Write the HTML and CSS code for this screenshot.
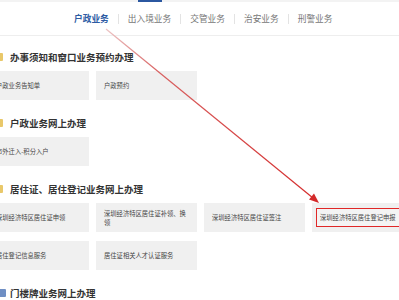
FILE: index.html
```html
<!DOCTYPE html>
<html lang="zh-CN">
<head>
<meta charset="utf-8">
<link rel="stylesheet" href="styles.css">
</head>
<body>
<div class="page">
  <div class="topstrip"><span class="topmark"></span></div>
  <nav class="nav">
    <span class="nav-item active">户政业务</span>
    <span class="nav-item">出入境业务</span>
    <span class="nav-item">交管业务</span>
    <span class="nav-item">治安业务</span>
    <span class="nav-item">刑警业务</span>
  </nav>
  <main class="content">
    <section class="section first">
      <h2 class="section-title"><span class="mark"></span>办事须知和窗口业务预约办理</h2>
      <div class="cards">
        <div class="card">户政业务告知单</div>
        <div class="card">户政预约</div>
      </div>
    </section>
    <section class="section">
      <h2 class="section-title"><span class="mark"></span>户政业务网上办理</h2>
      <div class="cards">
        <div class="card">市外迁入-积分入户</div>
      </div>
    </section>
    <section class="section">
      <h2 class="section-title"><span class="mark"></span>居住证、居住登记业务网上办理</h2>
      <div class="cards">
        <div class="card">深圳经济特区居住证申领</div>
        <div class="card">深圳经济特区居住证补领、换领</div>
        <div class="card">深圳经济特区居住证签注</div>
        <div class="card"><span class="highlight">深圳经济特区居住登记申报</span></div>
        <div class="card">居住登记信息服务</div>
        <div class="card">居住证相关人才认证服务</div>
      </div>
    </section>
    <section class="section">
      <h2 class="section-title"><span class="mark blue"></span>门楼牌业务网上办理</h2>
    </section>
  </main>
  <svg class="arrow" width="399" height="300" viewBox="0 0 399 300">
    <defs>
      <linearGradient id="g" x1="106" y1="29" x2="318" y2="202" gradientUnits="userSpaceOnUse">
        <stop offset="0" stop-color="#ecc4c4"/>
        <stop offset="0.25" stop-color="#d86060"/>
        <stop offset="1" stop-color="#d42a2a"/>
      </linearGradient>
    </defs>
    <line x1="106" y1="29" x2="313" y2="198" stroke="url(#g)" stroke-width="1.2"/>
    <polygon points="319,203 309,199.5 314,193.5" fill="#d42a2a"/>
  </svg>
</div>
</body>
</html>
```

FILE: styles.css
```css
html, body {
  margin: 0;
  padding: 0;
  background: #fff;
}
body {
  width: 399px;
  height: 300px;
  overflow: hidden;
  font-family: "Noto Sans CJK SC", "Noto Sans", sans-serif;
}
.page {
  position: relative;
  width: 399px;
  height: 300px;
  overflow: hidden;
}
.topstrip {
  height: 2px;
  background: #f3f3f3;
  position: relative;
}
.topmark {
  position: absolute;
  left: 138px;
  top: 0;
  width: 24px;
  height: 2px;
  background: #2b57a0;
}
.nav {
  display: flex;
  align-items: center;
  height: 33px;
  padding-left: 65px;
  border-bottom: 1px solid #eeeeee;
}
.nav-item {
  font-size: 8.7px;
  line-height: 10px;
  color: #777;
  padding: 0 9px;
  border-left: 1px solid #e3e3e3;
}
.nav-item:first-child {
  border-left: none;
}
.nav-item.active {
  color: #2d5ba3;
  font-weight: bold;
}
.content {
  margin-left: -12px;
}
.section {
  margin-top: 16px;
}
.section.first {
  margin-top: 14px;
}
.section-title {
  display: flex;
  align-items: center;
  height: 14px;
  margin: 0 0 7px 0;
  padding-left: 22px;
  font-size: 9.5px;
  font-weight: bold;
  color: #333;
  position: relative;
}
.mark {
  position: absolute;
  left: 8px;
  top: 3px;
  width: 7px;
  height: 8px;
  background: #e9c86a;
  border-radius: 1px;
}
.mark.blue {
  background: #6f8fc4;
  width: 10px;
}
.cards {
  display: grid;
  grid-template-columns: repeat(4, 101px);
  column-gap: 7px;
  row-gap: 9px;
}
.card {
  height: 29px;
  background: #f0f0f0;
  padding: 0 8px 0 8px;
  display: flex;
  align-items: center;
  font-size: 6.3px;
  line-height: 9px;
  color: #444;
  box-sizing: border-box;
}
.highlight {
  display: block;
  white-space: nowrap;
  border: 1px solid #e02828;
  padding: 4px 30px 4px 3px;
  margin-left: -4px;
  background: #f4f4f4;
}
.arrow {
  position: absolute;
  left: 0;
  top: 0;
  pointer-events: none;
}
```
